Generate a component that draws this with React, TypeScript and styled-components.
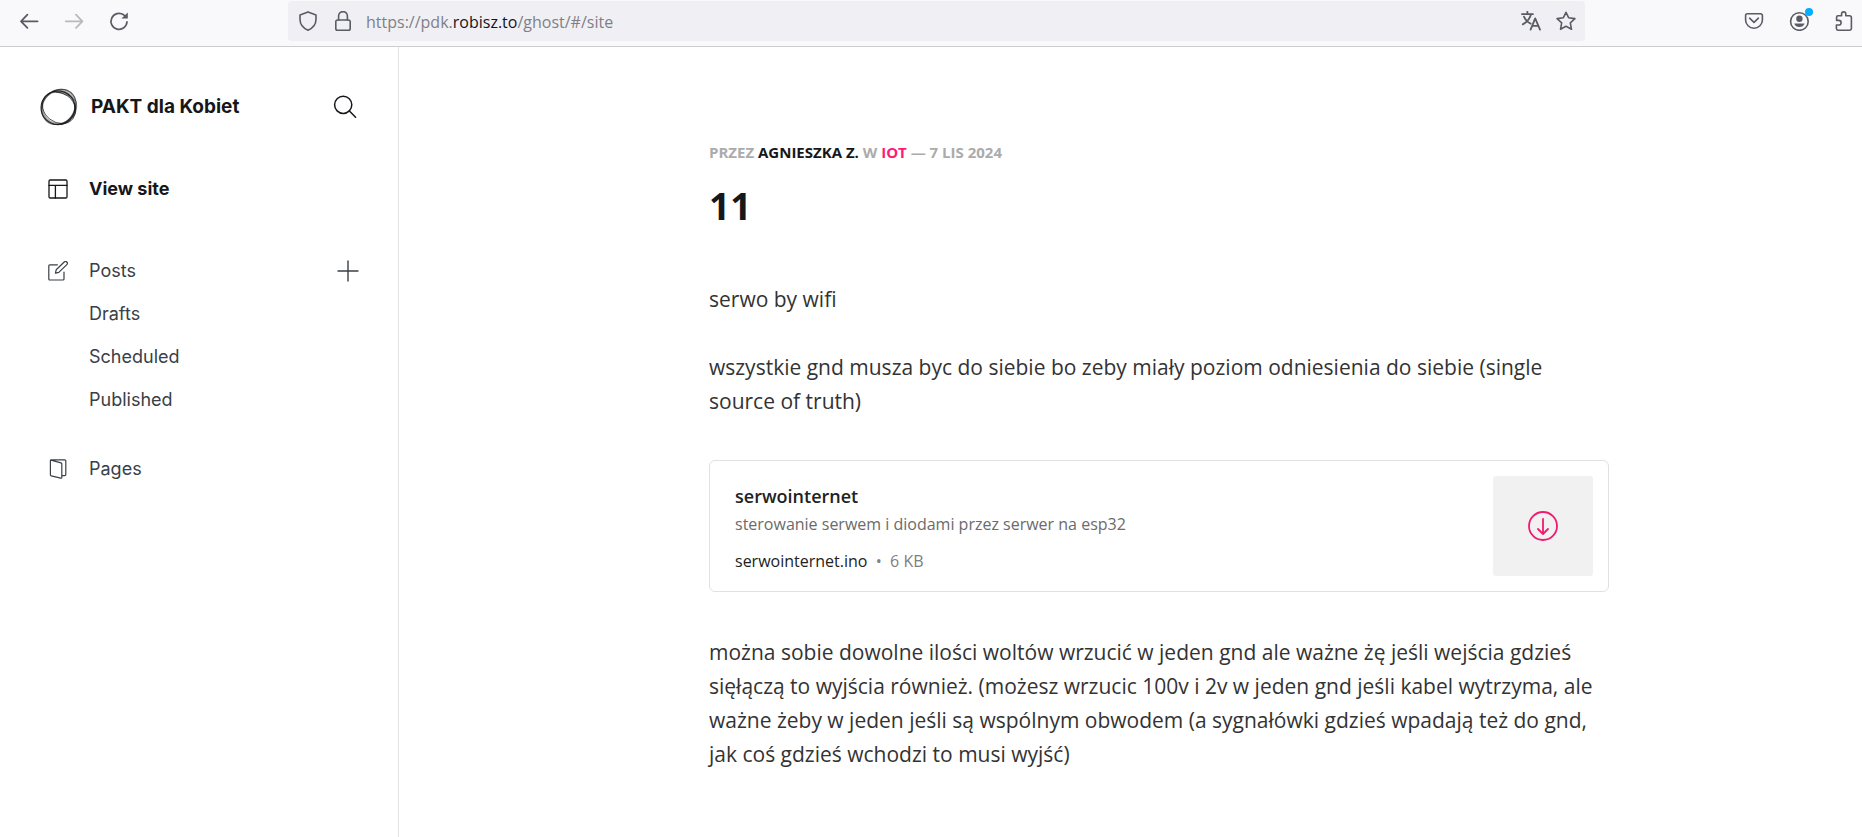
import React from "react";
import styled, { createGlobalStyle } from "styled-components";

const GlobalStyle = createGlobalStyle`
  *, *::before, *::after { box-sizing: border-box; }
  body { margin: 0; background: #fff; }
  h1, p, ul { margin: 0; padding: 0; }
  ul { list-style: none; }
  a { color: inherit; text-decoration: none; }
  button { padding: 0; border: 0; background: none; cursor: pointer; color: inherit; font: inherit; }
  svg { display: block; flex: none; }
`;

const Page = styled.div`
  display: flex;
  flex-direction: column;
  min-height: 100vh;
`;

/* Browser toolbar */

const Toolbar = styled.header`
  display: flex;
  align-items: flex-start;
  height: 47px;
  padding-top: 1px;
  background: #f9f9fb;
  border-bottom: 1px solid #cccccf;
  color: #5b5b66;
`;

const ToolGroup = styled.div<{ $width: number; $end?: boolean }>`
  display: flex;
  flex: none;
  align-items: center;
  width: ${(p) => p.$width}px;
  height: 40px;
  gap: 9px;
  padding-left: ${(p) => (p.$end ? 0 : 11)}px;
  justify-content: ${(p) => (p.$end ? "flex-end" : "flex-start")};
`;

const ToolButton = styled.button<{ $size?: number }>`
  position: relative;
  display: flex;
  flex: none;
  align-items: center;
  justify-content: center;
  width: ${(p) => p.$size ?? 36}px;
  height: 36px;
  &:disabled { opacity: 0.4; cursor: default; }
`;

const Dot = styled.span`
  position: absolute;
  top: 5px;
  right: 4px;
  width: 8px;
  height: 8px;
  border-radius: 50%;
  background: #00aeff;
`;

const UrlBar = styled.div`
  display: flex;
  flex: 1;
  min-width: 0;
  align-items: center;
  gap: 11px;
  height: 40px;
  padding: 0 7px 0 8px;
  border-radius: 4px;
  background: #f0f0f4;
`;

const UrlText = styled.div`
  flex: 1;
  min-width: 0;
  padding-top: 2px;
  overflow: hidden;
  white-space: nowrap;
  outline: none;
  color: #7f7f86;
  font: 16px/24px "Open Sans", sans-serif;
`;

const Domain = styled.span`
  color: #15141a;
`;

/* Admin sidebar */

const Main = styled.div`
  display: flex;
  flex: 1;
`;

const Sidebar = styled.nav`
  flex: none;
  width: 399px;
  padding: 41px 37px 0 40px;
  border-right: 1px solid #e1e3e5;
  color: #394047;
  font: 18px/24px Inter, sans-serif;
`;

const SiteHead = styled.div`
  display: flex;
  align-items: center;
  gap: 13px;
  height: 38px;
  margin-bottom: 41px;
  padding-right: 3px;
  color: #15171a;
`;

const SiteName = styled.span`
  flex: 1;
  font-size: 19px;
  font-weight: 700;
`;

const IconButton = styled.button`
  display: flex;
  align-items: center;
  justify-content: center;
  width: 26px;
  height: 26px;
`;

const Section = styled.ul<{ $gap: number }>`
  margin-bottom: ${(p) => p.$gap}px;
`;

const Row = styled.li<{ $strong?: boolean; $nested?: boolean }>`
  display: flex;
  align-items: center;
  justify-content: space-between;
  height: 43px;
  padding-left: ${(p) => (p.$nested ? 49 : 8)}px;
  color: ${(p) => (p.$strong ? "#15171a" : "inherit")};
  font-weight: ${(p) => (p.$strong ? 700 : 400)};
`;

const RowLink = styled.a`
  display: flex;
  align-items: center;
  gap: 21px;
`;

/* Post preview */

const Preview = styled.main`
  flex: 1;
  min-width: 0;
  padding: 95px 32px 64px 89px;
  font-family: "Open Sans", sans-serif;
`;

const Article = styled.article`
  max-width: 900px;
  margin: 0 auto;
`;

const Meta = styled.p`
  color: #ababab;
  font-size: 15px;
  line-height: 20px;
  font-weight: 700;
  text-transform: uppercase;
`;

const MetaLink = styled.a<{ $accent?: boolean }>`
  color: ${(p) => (p.$accent ? "#ff1a75" : "#15171a")};
`;

const Title = styled.h1`
  margin: 22px 0 54px;
  color: #15171a;
  font-size: 37px;
  line-height: 44px;
  font-weight: 700;
`;

const Text = styled.p`
  margin-bottom: 34px;
  color: #333;
  font-size: 21px;
  line-height: 34px;
`;

const FileCard = styled.a`
  display: flex;
  justify-content: space-between;
  margin: 42px 0 43px;
  padding: 15px;
  border: 1px solid #dfe1e3;
  border-radius: 6px;
`;

const FileInfo = styled.div`
  display: flex;
  flex-direction: column;
  padding: 7px 0 0 10px;
  color: #222;
  font-size: 16px;
  line-height: 27px;
`;

const FileTitle = styled.span`
  margin-bottom: 1px;
  font-size: 18px;
  font-weight: 600;
`;

const FileCaption = styled.span`
  margin-bottom: 10px;
  color: #6b6b6b;
`;

const FileSize = styled.span`
  color: #808080;
`;

const FileIcon = styled.div`
  display: flex;
  align-items: center;
  justify-content: center;
  width: 100px;
  height: 100px;
  border-radius: 3px;
  background: #f1f1f1;
  color: #f01a70;
`;

/* Icons */

type IconProps = {
  size?: number;
  box?: number;
  stroke?: number;
  children: React.ReactNode;
};

const Icon = ({ size = 20, box = 20, stroke = 1.5, children }: IconProps) => (
  <svg
    width={size}
    height={size}
    viewBox={`0 0 ${box} ${box}`}
    fill="none"
    stroke="currentColor"
    strokeWidth={stroke}
    strokeLinecap="round"
    strokeLinejoin="round"
    aria-hidden="true"
  >
    {children}
  </svg>
);

const Logo = () => (
  <svg width="38" height="38" viewBox="0 0 38 38" fill="none" stroke="#15171a" aria-hidden="true">
    <ellipse cx="18" cy="19.8" rx="17" ry="16.8" strokeWidth="1.1" opacity="0.9" />
    <ellipse cx="18.6" cy="19.6" rx="16.6" ry="16.4" strokeWidth="2.2" opacity="0.4" />
    <ellipse cx="19.4" cy="19.6" rx="17.8" ry="14.6" strokeWidth="0.9" opacity="0.75" transform="rotate(38 19 19)" />
    <ellipse cx="19" cy="18.8" rx="18.8" ry="16" strokeWidth="1" opacity="0.65" transform="rotate(-50 19 19)" />
    <path d="M12 3.4C21 -1.2 33 1.8 35.6 13.2C31 7 23 5.4 12 3.4Z" fill="#15171a" strokeWidth="0.8" fillOpacity="0.22" strokeOpacity="0.6" />
    <path d="M36 13C39 24 32 34.6 21 36.8C30 32 35 25 36 13Z" fill="#15171a" strokeWidth="0.6" fillOpacity="0.35" strokeOpacity="0.5" />
  </svg>
);

export default function App() {
  return (
    <Page>
      <GlobalStyle />
      <Toolbar>
        <ToolGroup $width={288}>
          <ToolButton aria-label="Back">
            <Icon stroke={1.8}>
              <path d="M2 10.3H18.6M8.4 3.7L2 10.3L8.4 16.9" />
            </Icon>
          </ToolButton>
          <ToolButton aria-label="Forward" disabled>
            <Icon stroke={1.8}>
              <path d="M1.8 10.3H18.4M12 3.7L18.4 10.3L12 16.9" />
            </Icon>
          </ToolButton>
          <ToolButton aria-label="Reload">
            <Icon stroke={1.7}>
              <path d="M18 10.8A8 8 0 1 1 14.6 3.8L16.4 5.2" />
              <path d="M18.8 1.4V7.6H12.4Z" fill="currentColor" stroke="none" />
            </Icon>
          </ToolButton>
        </ToolGroup>
        <UrlBar>
          <ToolButton $size={24} aria-label="Tracking protection">
            <Icon stroke={1.6}>
              <path d="M10 .9L18 3.9V8.2C18 13 15 17 10 19.2C5 17 2 13 2 8.2V3.9Z" />
            </Icon>
          </ToolButton>
          <ToolButton $size={24} aria-label="Connection secure">
            <Icon stroke={1.6}>
              <rect x="2.8" y="9" width="14.4" height="10.2" rx="1.8" />
              <path d="M5.6 9V5A4.4 4.4 0 0 1 14.4 5V9" />
            </Icon>
          </ToolButton>
          <UrlText role="textbox" tabIndex={0} aria-label="Address">
            https://pdk.<Domain>robisz.to</Domain>/ghost/#/site
          </UrlText>
          <ToolButton $size={24} aria-label="Translate page">
            <Icon stroke={1.8}>
              <path d="M.9 3.1H12M6.4 .8V3M10 3.3C9 7.6 6 11 1.8 13.4M3 5.6C4.4 9 7.2 11.6 9.6 12.6" />
              <path d="M9.6 18.6L14.2 7.4L19 18.6M11.2 14.9H17.3" />
            </Icon>
          </ToolButton>
          <ToolButton $size={24} aria-label="Bookmark this page">
            <Icon stroke={1.6}>
              <path d="M10 1.3L12.6 6.7L18.9 7.6L14.3 11.9L15.5 18.3L10 15.3L4.5 18.3L5.7 11.9L1.1 7.6L7.4 6.7Z" />
            </Icon>
          </ToolButton>
        </UrlBar>
        <ToolGroup $width={277} $end>
          <ToolButton aria-label="Save to Pocket">
            <Icon stroke={1.6}>
              <path d="M3.4 2.8H16.6A1.8 1.8 0 0 1 18.4 4.6V9A8.4 8.2 0 0 1 1.6 9V4.6A1.8 1.8 0 0 1 3.4 2.8Z" />
              <path d="M5.6 7.2L10 11.4L14.4 7.2" />
            </Icon>
          </ToolButton>
          <ToolButton aria-label="Account">
            <Icon stroke={1.6}>
              <circle cx="10.4" cy="10.5" r="8.8" />
              <circle cx="10.4" cy="7.8" r="3.2" fill="currentColor" stroke="none" />
              <path d="M5.2 12.6H15.6C14.8 15 12.8 16.1 10.4 16.1S6 15 5.2 12.6Z" fill="currentColor" stroke="none" />
            </Icon>
            <Dot />
          </ToolButton>
          <ToolButton aria-label="Extensions">
            <Icon stroke={1.6}>
              <path d="M2.6 9V6.2A1.4 1.4 0 0 1 4 4.8H7.6V3A2.1 2.1 0 0 1 11.8 3V4.8H15.4A2 2 0 0 1 17.4 6.8V17.6A1.6 1.6 0 0 1 15.8 19.2H4A1.6 1.6 0 0 1 2.4 17.6V14H4.8A2.3 2.3 0 0 0 4.8 9.4H2.6Z" />
            </Icon>
          </ToolButton>
        </ToolGroup>
      </Toolbar>

      <Main>
        <Sidebar>
          <SiteHead>
            <Logo />
            <SiteName>PAKT dla Kobiet</SiteName>
            <IconButton aria-label="Search">
              <Icon size={24} box={24} stroke={1.5}>
                <circle cx="10.2" cy="9.8" r="8.6" />
                <path d="M16.4 16L22.6 22.2" />
              </Icon>
            </IconButton>
          </SiteHead>

          <Section $gap={39}>
            <Row $strong>
              <RowLink href="#view">
                <Icon stroke={1.3}>
                  <rect x="1" y="1" width="18" height="18" rx="1.2" />
                  <path d="M1 6.4H19M7.4 6.4V19" />
                </Icon>
                View site
              </RowLink>
            </Row>
          </Section>

          <Section $gap={26}>
            <Row>
              <RowLink href="#posts">
                <Icon stroke={1.2}>
                  <path d="M9.4 3.8H1.8A1 1 0 0 0 .8 4.8V18A1 1 0 0 0 1.8 19H15A1 1 0 0 0 16 18V11" />
                  <path d="M7.4 12.2L8.2 8.8L16.2 1A1.7 1.7 0 0 1 18.8 3.6L10.8 11.4Z" />
                </Icon>
                Posts
              </RowLink>
              <IconButton aria-label="New post">
                <Icon size={22} box={22} stroke={1.4}>
                  <path d="M11 1V21M1 11H21" />
                </Icon>
              </IconButton>
            </Row>
            <Row $nested><RowLink href="#drafts">Drafts</RowLink></Row>
            <Row $nested><RowLink href="#scheduled">Scheduled</RowLink></Row>
            <Row $nested><RowLink href="#published">Published</RowLink></Row>
          </Section>

          <Section $gap={0}>
            <Row>
              <RowLink href="#pages">
                <Icon stroke={1.2}>
                  <path d="M3 1.2L13 3.8A1 1 0 0 1 13.8 4.8V18.4A.8 .8 0 0 1 12.8 19.2L3.2 16.8A1 1 0 0 1 2.4 15.8V1.6A.8 .8 0 0 1 3.2 .8H16.8A1 1 0 0 1 17.8 1.8V15.6A1 1 0 0 1 16.8 16.6H13.8" />
                </Icon>
                Pages
              </RowLink>
            </Row>
          </Section>
        </Sidebar>

        <Preview>
          <Article>
            <Meta>
              Przez <MetaLink href="#author">Agnieszka Z.</MetaLink> w{" "}
              <MetaLink href="#iot" $accent>IoT</MetaLink> — 7 lis 2024
            </Meta>
            <Title>11</Title>
            <Text>serwo by wifi</Text>
            <Text>
              wszystkie gnd musza byc do siebie bo zeby miały poziom odniesienia do siebie (single
              source of truth)
            </Text>
            <FileCard href="#serwointernet.ino">
              <FileInfo>
                <FileTitle>serwointernet</FileTitle>
                <FileCaption>sterowanie serwem i diodami przez serwer na esp32</FileCaption>
                <span>
                  serwointernet.ino <FileSize>&nbsp;•&nbsp; 6 KB</FileSize>
                </span>
              </FileInfo>
              <FileIcon>
                <Icon size={32} box={32} stroke={1.8}>
                  <circle cx="16" cy="16" r="14" />
                  <path d="M16 9V23M11 19L16 24L21 19" />
                </Icon>
              </FileIcon>
            </FileCard>
            <Text>
              można sobie dowolne ilości woltów wrzucić w jeden gnd ale ważne żę jeśli wejścia gdzieś
              sięłączą to wyjścia również. (możesz wrzucic 100v i 2v w jeden gnd jeśli kabel wytrzyma,
              ale ważne żeby w jeden jeśli są wspólnym obwodem (a sygnałówki gdzieś wpadają też do gnd,
              jak coś gdzieś wchodzi to musi wyjść)
            </Text>
          </Article>
        </Preview>
      </Main>
    </Page>
  );
}
